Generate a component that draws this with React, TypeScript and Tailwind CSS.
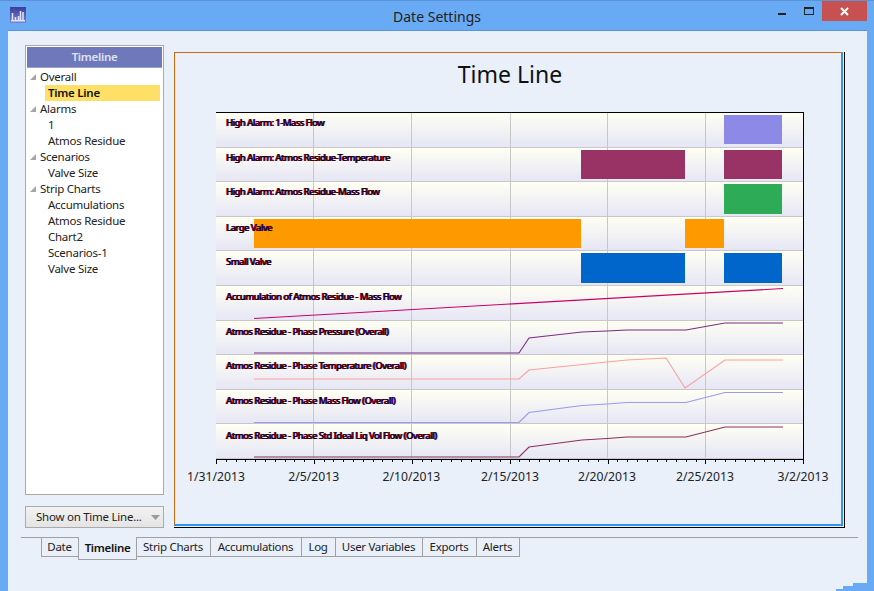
const treeGroups = [
  { name: "Overall", items: ["Time Line"] },
  { name: "Alarms", items: ["1", "Atmos Residue"] },
  { name: "Scenarios", items: ["Valve Size"] },
  { name: "Strip Charts", items: ["Accumulations", "Atmos Residue", "Chart2", "Scenarios-1", "Valve Size"] },
];

const rowLabels = [
  { text: "High Alarm: 1-Mass Flow", pt: "pt-[3px]" },
  { text: "High Alarm: Atmos Residue-Temperature", pt: "pt-[3px]" },
  { text: "High Alarm: Atmos Residue-Mass Flow", pt: "pt-[3px]" },
  { text: "Large Valve", pt: "pt-[4px]" },
  { text: "Small Valve", pt: "pt-[4px]" },
  { text: "Accumulation of Atmos Residue - Mass Flow", pt: "pt-[4px]" },
  { text: "Atmos Residue - Phase Pressure (Overall)", pt: "pt-[4px]" },
  { text: "Atmos Residue - Phase Temperature (Overall)", pt: "pt-[4px]" },
  { text: "Atmos Residue - Phase Mass Flow (Overall)", pt: "pt-[4px]" },
  { text: "Atmos Residue - Phase Std Ideal Liq Vol Flow (Overall)", pt: "pt-[5px]" },
];

// plot coordinates: origin is the plot's top left corner (216,112)
const bars = [
  { x: 508, y: 3, w: 58, h: 29, fill: "#8c8ae6" },
  { x: 365, y: 38, w: 104, h: 29, fill: "#993366" },
  { x: 508, y: 38, w: 58, h: 29, fill: "#993366" },
  { x: 508, y: 72, w: 58, h: 30, fill: "#2dab57" },
  { x: 38, y: 107, w: 327, h: 29, fill: "#ff9900" },
  { x: 469, y: 107, w: 39, h: 29, fill: "#ff9900" },
  { x: 365, y: 141, w: 104, h: 30, fill: "#0066cc" },
  { x: 508, y: 141, w: 58, h: 30, fill: "#0066cc" },
];

const lines = [
  { stroke: "#cc0066", pts: "38,206.5 567,176.5" },
  { stroke: "#7b2d82", pts: "38,241 303,241 313,226 366,220 391,219 411,218 470,218 509,211 567,211" },
  { stroke: "#ff9f9f", pts: "38,267 303,267 313,258 391,250 411,248 450,246 469,276 509,248 567,248" },
  { stroke: "#9999ee", pts: "38,310.5 303,310.5 313,300.5 366,293.5 391,292 411,290.5 470,290.5 509,280.5 567,280.5" },
  { stroke: "#8c3060", pts: "38,345 303,345 313,335 366,328 391,326.5 411,325 470,325 509,315 567,315" },
];

const axisLabels = [
  { x: 0, text: "1/31/2013" },
  { x: 97.7, text: "2/5/2013" },
  { x: 195.4, text: "2/10/2013" },
  { x: 294, text: "2/15/2013" },
  { x: 391, text: "2/20/2013" },
  { x: 489, text: "2/25/2013" },
  { x: 587, text: "3/2/2013" },
];

const ticks = Array.from({ length: 61 }, (_, i) => i);

const tabs = [
  { name: "Date", w: "w-[38px]" },
  { name: "Timeline", w: "w-[59px]" },
  { name: "Strip Charts", w: "w-[75px]" },
  { name: "Accumulations", w: "w-[92px]" },
  { name: "Log", w: "w-[35px]" },
  { name: "User Variables", w: "w-[88px]" },
  { name: "Exports", w: "w-[55px]" },
  { name: "Alerts", w: "w-[44px]" },
];

function TitleBar() {
  return (
    <div className="relative flex h-[30px] items-start border-t border-[#5b93d8]">
      <svg className="ml-[10px] mt-[6px]" width="16" height="16" viewBox="0 0 16 16">
        <defs>
          <linearGradient id="appIcon" x1="0" y1="0" x2="0" y2="1">
            <stop offset="0" stopColor="#3c3c9c" />
            <stop offset="1" stopColor="#7484d4" />
          </linearGradient>
        </defs>
        <rect width="16" height="16" fill="url(#appIcon)" />
        <path d="M2.5 6v7M5.5 10v3M8.5 9v4M10.5 4v9M13 5v8" stroke="#e6e8f6" strokeWidth="1.5" />
        <rect x="1" y="13" width="14" height="1.5" fill="#dfe4f7" />
      </svg>
      <div className="absolute left-0 right-0 top-[6px] text-center text-[14px] leading-[19px] text-[#222]">
        Date Settings
      </div>
      <div className="ml-auto mr-[7px] flex items-start">
        <div className="mr-[18px] mt-[12px] h-[2px] w-[8px] bg-[#222]" />
        <div className="mr-[8px] mt-[6px] h-[8px] w-[10px] border border-t-2 border-[#222]" />
        <div className="flex h-[20px] w-[45px] items-center justify-center bg-[#c75050]">
          <svg width="9" height="9" viewBox="0 0 9 9">
            <path d="M1 1l7 7M8 1l-7 7" stroke="#fff" strokeWidth="2" />
          </svg>
        </div>
      </div>
    </div>
  );
}

function TreeArrow() {
  return (
    <svg className="mr-[4px] shrink-0" width="6" height="6" viewBox="0 0 6 6">
      <path d="M6 0v6H0z" fill="#a6a6a6" />
    </svg>
  );
}

function Sidebar() {
  return (
    <div className="flex w-[139px] flex-col">
      <div className="h-[450px] border border-[#aaaaaa] bg-white p-px">
        <div className="flex h-[21px] items-center justify-center border-b border-[#9aa0cc] bg-[#6f78bb] text-[11.5px] font-semibold tracking-[-0.3px] text-[#dfe3f2]">
          Timeline
        </div>
        <div className="pl-[3px] pt-[1px] text-[11.5px] leading-[16px] tracking-[-0.25px] text-[#222]">
          {treeGroups.map((group) => (
            <div key={group.name}>
              <div className="flex h-[16px] items-center">
                <TreeArrow />
                {group.name}
              </div>
              {group.items.map((item, i) =>
                item === "Time Line" ? (
                  <div key={i} className="ml-[15px] mr-[2px] h-[16px] bg-[#ffe066] pl-[3px] font-semibold text-[#111]">
                    {item}
                  </div>
                ) : (
                  <div key={i} className="ml-[18px] h-[16px]">
                    {item}
                  </div>
                )
              )}
            </div>
          ))}
        </div>
      </div>
      <div className="mt-[11px] flex h-[22px] items-center whitespace-nowrap border border-[#aaaaaa] bg-gradient-to-b from-[#f2f2f2] to-[#e4e4e4] pl-[10px] pr-[3px] text-[11.5px] tracking-[-0.25px] text-[#222]">
        Show on Time Line...
        <svg className="ml-auto" width="9" height="5" viewBox="0 0 9 5">
          <path d="M0 0h9L4.5 5z" fill="#9a9a9a" />
        </svg>
      </div>
    </div>
  );
}

function Plot() {
  return (
    <div className="relative ml-[41px] flex h-[347px] w-[588px] flex-col border-r border-t border-black">
      {rowLabels.map((label) => (
        <div
          key={label.text}
          className="flex-1 border-b border-[#c8c8c8] bg-gradient-to-b from-[#fffff3] to-[#e6e6f6] pl-[10px] last:border-b-0"
        >
          <span className={`${label.pt} relative z-10 block whitespace-nowrap text-[9.5px] font-medium leading-[13px] tracking-[-0.58px] text-black [text-shadow:-0.5px_0_0_#e00000,0.5px_0_0_#0000e0]`}>
            {label.text}
          </span>
        </div>
      ))}
      <svg className="absolute left-0 top-[-1px] overflow-visible" width="587" height="347" viewBox="0 0 587 347">
        {[97, 195, 294, 391, 489].map((x) => (
          <line key={x} x1={x + 0.5} x2={x + 0.5} y1="1" y2="347" stroke="#c8c8c8" strokeWidth="1" />
        ))}
        {bars.map((b) => (
          <rect key={`${b.x}-${b.y}`} x={b.x} y={b.y} width={b.w} height={b.h} fill={b.fill} />
        ))}
        {lines.map((l) => (
          <polyline key={l.stroke} points={l.pts} fill="none" stroke={l.stroke} strokeWidth="1.1" />
        ))}
      </svg>
    </div>
  );
}

function Axis() {
  return (
    <svg className="ml-[41px] block overflow-visible" width="588" height="30" viewBox="0 0 588 30">
      <line x1="0" x2="588" y1="0.5" y2="0.5" stroke="#000" strokeWidth="1" />
      {ticks.map((i) => {
        const x = Math.round(i * 9.79) + 0.5;
        return <line key={i} x1={x} x2={x} y1="0" y2={i % 10 === 0 ? 5 : 3} stroke="#000" />;
      })}
      {axisLabels.map((a) => (
        <text key={a.text} x={a.x} y="22" textAnchor="middle" fontSize="12.2" fill="#222" fontFamily="'Noto Sans', sans-serif">
          {a.text}
        </text>
      ))}
    </svg>
  );
}

function TabStrip() {
  return (
    <div className="ml-[13px] mr-[9px] mt-[9px] border-t border-[#a0a0a0] pl-[20px]">
      <div className="flex items-start text-[11.5px] tracking-[-0.3px]">
        {tabs.map((tab) =>
          tab.name === "Timeline" ? (
            <div
              key={tab.name}
              className={`${tab.w} relative z-10 -mr-px -mt-px flex h-[23px] items-center justify-center border border-t-0 border-[#a0a0a0] bg-[#e9f0fa] font-semibold text-[#111]`}
            >
              {tab.name}
            </div>
          ) : (
            <div
              key={tab.name}
              className={`${tab.w} -mr-px flex h-[19px] items-center justify-center border border-t-0 border-[#a0a0a0] pr-px text-[#222]`}
            >
              {tab.name}
            </div>
          )
        )}
      </div>
    </div>
  );
}

export default function App() {
  return (
    <div className="relative flex h-[591px] w-[874px] flex-col overflow-hidden bg-[#69aaf5] font-['Noto_Sans',sans-serif]">
      <TitleBar />
      <div className="ml-[8px] mr-[7px] flex-1 border-t border-[#5b93d8] bg-[#e9f0fa]">
        <div className="flex pl-[17px] pt-[14px]">
          <Sidebar />
          <div className="ml-[10px] mt-[7px] h-[476px] w-[671px] border-b border-r border-black pb-px pr-px">
            <div className="h-full w-full border-b-2 border-l border-r-2 border-t border-b-[#2f96f5] border-l-[#d06a10] border-r-[#2f96f5] border-t-[#d06a10]">
              <div className="h-[59px] pl-[4px] pt-[5px] text-center text-[23px] leading-[32px] text-[#111]">Time Line</div>
              <Plot />
              <Axis />
            </div>
          </div>
        </div>
        <TabStrip />
      </div>
      <svg className="absolute bottom-0 right-0" width="38" height="8" viewBox="0 0 38 8">
        <path d="M38 0H17v3H7v3H0v2h38z" fill="#69aaf5" />
      </svg>
    </div>
  );
}
